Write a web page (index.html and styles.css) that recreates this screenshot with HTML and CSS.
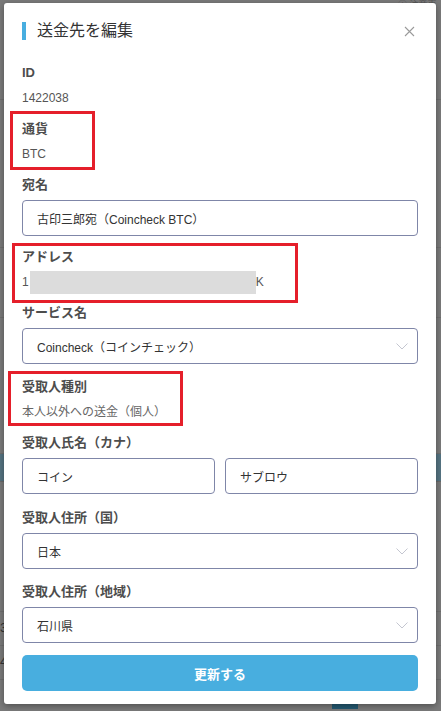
FILE: index.html
```html
<!DOCTYPE html>
<html lang="ja">
<head>
<meta charset="utf-8">
<title>送金先を編集</title>
<link rel="stylesheet" href="styles.css">
</head>
<body>
<div class="backdrop">
  <div class="bg-top"><span class="bg-note">ⓘ 注意事項</span></div>
  <div class="bg-row r1"></div>
  <div class="bg-row r2"></div>
  <div class="bg-row r3"></div>
  <div class="bg-row r4"></div>
  <div class="bg-row band"></div>
  <div class="bg-row r5"></div>
  <div class="bg-row r6"><span class="bg-num">3</span></div>
  <div class="bg-row r7"><span class="bg-num">4</span></div>
  <div class="bg-row r8"><span class="bg-btn"></span></div>
</div>

<div class="modal">
  <div class="modal-header">
    <span class="title-bar"></span>
    <h1 class="modal-title">送金先を編集</h1>
    <svg class="close" width="11" height="11" viewBox="0 0 11 11"><path d="M1 1L10 10M10 1L1 10" stroke="#9a9a9a" stroke-width="1.1" fill="none"/></svg>
  </div>

  <div class="form">
    <div class="label">ID</div>
    <div class="value">1422038</div>

    <div class="label">通貨</div>
    <div class="value">BTC</div>

    <div class="label">宛名</div>
    <div class="field">古印三郎宛（Coincheck BTC）</div>

    <div class="label">アドレス</div>
    <div class="value">1<span class="mask"></span>K</div>

    <div class="label">サービス名</div>
    <div class="field select">Coincheck（コインチェック）<svg class="chev" width="12" height="7" viewBox="0 0 12 7"><path d="M0.5 0.5L6 6L11.5 0.5" stroke="#c4c6d0" stroke-width="1" fill="none"/></svg></div>

    <div class="label spaced">受取人種別</div>
    <div class="value light">本人以外への送金（個人）</div>

    <div class="label">受取人氏名（カナ）</div>
    <div class="pair">
      <div class="field">コイン</div>
      <div class="field">サブロウ</div>
    </div>

    <div class="label spaced-lg">受取人住所（国）</div>
    <div class="field select">日本<svg class="chev" width="12" height="7" viewBox="0 0 12 7"><path d="M0.5 0.5L6 6L11.5 0.5" stroke="#c4c6d0" stroke-width="1" fill="none"/></svg></div>

    <div class="label spaced">受取人住所（地域）</div>
    <div class="field select">石川県<svg class="chev" width="12" height="7" viewBox="0 0 12 7"><path d="M0.5 0.5L6 6L11.5 0.5" stroke="#c4c6d0" stroke-width="1" fill="none"/></svg></div>

    <button class="submit">更新する</button>
  </div>

  <span class="mark m1"></span>
  <span class="mark m2"></span>
  <span class="mark m3"></span>
</div>
</body>
</html>
```

FILE: styles.css
```css
* { box-sizing: border-box; }

html, body {
  margin: 0;
  padding: 0;
}

body {
  width: 441px;
  height: 711px;
  overflow: hidden;
  background: #7a7a7a;
  font-family: "Liberation Sans", "Noto Sans CJK JP", sans-serif;
  position: relative;
}

/* dimmed page behind the dialog */
.backdrop {
  display: flex;
  flex-direction: column;
}
.bg-top {
  height: 8px;
  position: relative;
}
.bg-note {
  position: absolute;
  left: 398px;
  top: 0;
  font-size: 9px;
  line-height: 10px;
  color: #555;
}
.bg-row {
  border-bottom: 1px solid #6f6f6f;
  position: relative;
}
.r1 { height: 92px; }
.r2 { height: 148px; }
.r3 { height: 70px; }
.r4 { height: 136px; }
.band { height: 28px; background: #557482; border-bottom: 1px solid #6a6a6a; }
.r5 { height: 130px; }
.r6 { height: 34px; }
.r7 { height: 34px; }
.r8 { height: 40px; }
.bg-num {
  position: absolute;
  left: 0;
  top: 8px;
  font-size: 13px;
  color: #333;
}
.bg-btn {
  position: absolute;
  left: 332px;
  top: 9px;
  width: 26px;
  height: 20px;
  background: #245a72;
}

/* dialog */
.modal {
  position: absolute;
  left: 4px;
  top: 3px;
  width: 432px;
  height: 701px;
  background: #fff;
  border-radius: 3px;
  box-shadow: 0 2px 6px rgba(0, 0, 0, 0.35);
  padding: 16px 18px 13px 18px;
}

.modal-header {
  display: flex;
  align-items: center;
  height: 24px;
  margin-bottom: 20px;
}
.title-bar {
  width: 4px;
  height: 18px;
  background: #48aee0;
  margin-right: 11px;
}
.modal-title {
  margin: 0;
  font-size: 16px;
  font-weight: 400;
  color: #333;
  line-height: 24px;
  flex: 1;
}
.close {
  margin-right: 3px;
}

.form {
  display: flex;
  flex-direction: column;
}

.label {
  font-size: 13px;
  font-weight: 700;
  color: #4d4d4d;
  line-height: 20px;
  height: 20px;
  margin-top: 11px;
}
.form > .label:first-child { margin-top: 0; }
.label.spaced { margin-top: 13px; }
.label.spaced-lg { margin-top: 14px; }

.value {
  font-size: 12px;
  color: #555;
  line-height: 20px;
  height: 20px;
  margin-top: 5px;
  display: flex;
  align-items: center;
}
.value.light { color: #666; }

.mask {
  display: inline-block;
  flex: none;
  width: 226px;
  height: 23px;
  margin-left: 1px;
  background: #dcdcdc;
}

.field {
  height: 36px;
  border: 1px solid #7f86a8;
  border-radius: 4px;
  padding: 0 14px;
  font-size: 12px;
  color: #333;
  display: flex;
  align-items: center;
  margin-top: 5px;
}
.select {
  justify-content: space-between;
  padding-right: 9px;
}

.pair {
  display: grid;
  grid-template-columns: 1fr 1fr;
  gap: 10px;
  margin-top: 5px;
}
.pair .field { margin-top: 0; }

.submit {
  margin-top: 12px;
  height: 36px;
  border: none;
  border-radius: 5px;
  background: #48aedf;
  color: #fff;
  font-family: "Noto Sans CJK JP", sans-serif;
  font-size: 13px;
  font-weight: 700;
  width: 100%;
}

/* red annotation boxes drawn over the dialog */
.mark {
  position: absolute;
  border: 3px solid #e51f2a;
}
.m1 { left: 6px; top: 108px; width: 85px; height: 59px; }
.m2 { left: 8px; top: 240px; width: 286px; height: 60px; }
.m3 { left: 4px; top: 368px; width: 175px; height: 55px; }
```
